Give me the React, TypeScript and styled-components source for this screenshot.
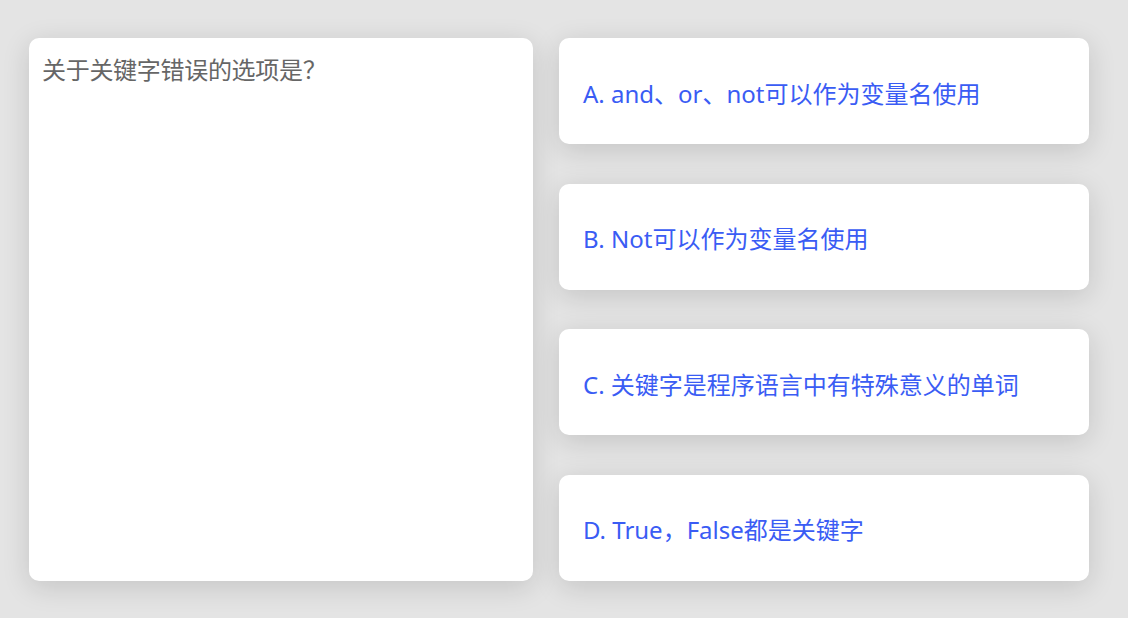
import React from "react";
import styled, { createGlobalStyle } from "styled-components";

const Global = createGlobalStyle`
  html, body { margin: 0; padding: 0; }
  body {
    background: #e4e4e4;
    font-family: "Noto Sans", "Noto Sans CJK SC", sans-serif;
  }
`;

const Page = styled.div`
  box-sizing: border-box;
  width: 1128px;
  height: 618px;
  padding: 38px 39px 37px 29px;
  display: grid;
  grid-template-columns: 504px 530px;
  column-gap: 26px;
`;

const QuestionCard = styled.div`
  background: #fff;
  border-radius: 10px;
  box-shadow: 0 6px 28px rgba(0, 0, 0, 0.14);
  padding: 14px 13px;
  color: #666;
  font-size: 24px;
  line-height: 36px;
  letter-spacing: -0.3px;
`;

const Options = styled.div`
  display: flex;
  flex-direction: column;
  justify-content: space-between;
`;

const Option = styled.div`
  height: 106px;
  box-sizing: border-box;
  background: #fff;
  border-radius: 10px;
  box-shadow: 0 6px 28px rgba(0, 0, 0, 0.14);
  padding: 2px 24px 0;
  display: flex;
  align-items: center;
  color: #3a5cf4;
  font-size: 24px;
`;

const options = [
  "A. and、or、not可以作为变量名使用",
  "B. Not可以作为变量名使用",
  "C. 关键字是程序语言中有特殊意义的单词",
  "D. True，False都是关键字",
];

export default function App() {
  return (
    <>
      <Global />
      <Page>
        <QuestionCard>关于关键字错误的选项是？</QuestionCard>
        <Options>
          {options.map((o) => (
            <Option key={o}>{o}</Option>
          ))}
        </Options>
      </Page>
    </>
  );
}
